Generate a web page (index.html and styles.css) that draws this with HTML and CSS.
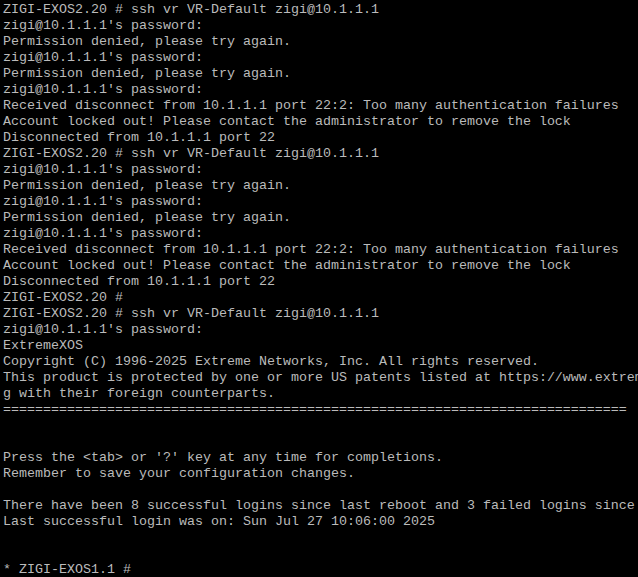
FILE: index.html
```html
<!DOCTYPE html>
<html>
<head>
<meta charset="utf-8">
<link rel="stylesheet" href="styles.css">
</head>
<body>
<pre class="term">ZIGI-EXOS2.20 # ssh vr VR-Default zigi@10.1.1.1
zigi@10.1.1.1's password:
Permission denied, please try again.
zigi@10.1.1.1's password:
Permission denied, please try again.
zigi@10.1.1.1's password:
Received disconnect from 10.1.1.1 port 22:2: Too many authentication failures
Account locked out! Please contact the administrator to remove the lock
Disconnected from 10.1.1.1 port 22
ZIGI-EXOS2.20 # ssh vr VR-Default zigi@10.1.1.1
zigi@10.1.1.1's password:
Permission denied, please try again.
zigi@10.1.1.1's password:
Permission denied, please try again.
zigi@10.1.1.1's password:
Received disconnect from 10.1.1.1 port 22:2: Too many authentication failures
Account locked out! Please contact the administrator to remove the lock
Disconnected from 10.1.1.1 port 22
ZIGI-EXOS2.20 #
ZIGI-EXOS2.20 # ssh vr VR-Default zigi@10.1.1.1
zigi@10.1.1.1's password:
ExtremeXOS
Copyright (C) 1996-2025 Extreme Networks, Inc. All rights reserved.
This product is protected by one or more US patents listed at https://www.extreme
g with their foreign counterparts.
==============================================================================


Press the &lt;tab&gt; or '?' key at any time for completions.
Remember to save your configuration changes.

There have been 8 successful logins since last reboot and 3 failed logins since last reboot
Last successful login was on: Sun Jul 27 10:06:00 2025


* ZIGI-EXOS1.1 #</pre>
</body>
</html>
```

FILE: styles.css
```css
html, body {
  margin: 0;
  padding: 0;
  background: #000;
  width: 638px;
  height: 577px;
  overflow: hidden;
}
.term {
  margin: 0;
  padding: 2px 0 0 3px;
  font-family: "Liberation Mono", "Courier New", monospace;
  font-size: 13.333px;
  line-height: 16px;
  color: #bbbbbb;
  white-space: pre;
  overflow: hidden;
}
```
